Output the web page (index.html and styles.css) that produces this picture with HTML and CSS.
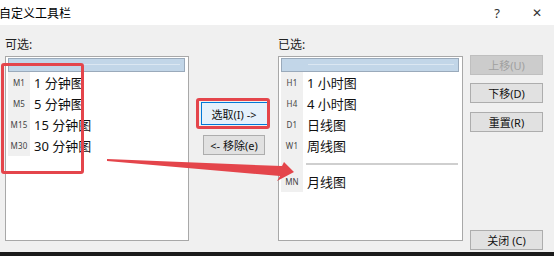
FILE: index.html
```html
<!DOCTYPE html>
<html lang="zh-CN">
<head>
  <meta charset="UTF-8" />
  <title>自定义工具栏</title>
  <link rel="stylesheet" href="styles.css">
</head>
<body>
  <div class="window">
    <div class="titlebar">
      <span class="title">自定义工具栏</span>
      <span class="tb-help">?</span>
      <span class="tb-close">✕</span>
    </div>

    <div class="dialog">
      <div class="pane pane-left">
        <div class="pane-label">可选:</div>
        <div class="listbox">
          <div class="list-head"></div>
          <div class="list-rows">
            <div class="row"><span class="ico">M1</span><span class="txt">1 分钟图</span></div>
            <div class="row"><span class="ico">M5</span><span class="txt">5 分钟图</span></div>
            <div class="row"><span class="ico">M15</span><span class="txt">15 分钟图</span></div>
            <div class="row"><span class="ico">M30</span><span class="txt">30 分钟图</span></div>
          </div>
        </div>
      </div>

      <div class="mid">
        <button class="btn btn-focus">选取(I) -&gt;</button>
        <button class="btn btn-remove">&lt;- 移除(e)</button>
      </div>

      <div class="pane pane-right">
        <div class="pane-label">已选:</div>
        <div class="listbox">
          <div class="list-head"></div>
          <div class="list-rows">
            <div class="row"><span class="ico">H1</span><span class="txt">1 小时图</span></div>
            <div class="row"><span class="ico">H4</span><span class="txt">4 小时图</span></div>
            <div class="row"><span class="ico">D1</span><span class="txt">日线图</span></div>
            <div class="row"><span class="ico">W1</span><span class="txt">周线图</span></div>
            <div class="row sep"><span class="ico"></span><span class="line"></span></div>
            <div class="row"><span class="ico">MN</span><span class="txt">月线图</span></div>
          </div>
        </div>
      </div>

      <div class="side">
        <button class="btn" disabled>上移(U)</button>
        <button class="btn">下移(D)</button>
        <button class="btn">重置(R)</button>
        <button class="btn btn-close">关闭 (C)</button>
      </div>
    </div>
    <div class="taskbar"></div>

    <!-- annotations -->
    <div class="mark mark-list"></div>
    <div class="mark mark-btn"></div>
    <svg class="arrow" width="554" height="256" viewBox="0 0 554 256">
      <polygon points="107,159 282,166 284,162 294,172 277,181 280,176 107,161" fill="#e4454b"/>
    </svg>
  </div>
</body>
</html>
```

FILE: styles.css
```css
body { margin: 0; background: #f0f0f0; font-family: "Noto Sans", "Noto Sans CJK SC", sans-serif; color: #000; }
.window { position: relative; width: 554px; height: 256px; overflow: hidden; background: #f0f0f0; }

.titlebar { height: 25px; background: #fff; display: flex; align-items: center; font-size: 12px; }
.title { margin-left: -1px; flex: 1; }
.tb-help { width: 20px; text-align: center; margin-right: 25px; font-size: 13px; color: #333; }
.tb-close { width: 14px; margin-right: 8px; font-size: 12px; color: #333; }

.dialog { display: flex; height: 215px; padding: 12px 0 0 5px; }
.pane { display: flex; flex-direction: column; }
.pane-left { width: 184px; }
.pane-right { width: 185px; }
.pane-label { height: 19px; font-size: 12px; line-height: 15px; color: #222; }

.listbox { height: 181px; background: #fff; border: 1px solid #a8a8a8; padding: 1px; }
.list-head { height: 12px; margin: 0 2px 0 1px; background: #c2d6e8; border: 1px solid #9aaabb; position: relative; }
.list-head::after { content: ""; position: absolute; left: 26px; right: 4px; top: 5px; height: 1px; background: #dbe7f2; }

.list-rows { display: flex; flex-direction: column; padding-left: 1px; }
.row { display: flex; align-items: center; height: 21px; }
.ico { width: 22px; height: 100%; background: #f0f0f0; font-size: 8px; color: #444; display: flex; align-items: center; justify-content: center; letter-spacing: 0.2px; }
.txt { margin-left: 4px; font-size: 13px; color: #111; }
.row.sep { height: 15px; }
.line { flex: 1; height: 2px; background: #cfcfcf; margin: 0 3px 0 3px; }

.mid { width: 89px; display: flex; flex-direction: column; align-items: center; padding-top: 65px; }
.btn { font-family: inherit; font-size: 11px; color: #111; background: #e1e1e1; border: 1px solid #adadad; padding: 0; height: 20px; }
.mid .btn { margin-left: 1px; }
.btn-focus { width: 67px; height: 23px; background: #e5f1fb; border-color: #0078d7; }
.btn-remove { width: 62px; margin-top: 10px; }

.side { width: 73px; margin-left: 7px; display: flex; flex-direction: column; padding: 18px 0 2px; }
.side .btn { margin-bottom: 8px; }
.side .btn:nth-child(2) { margin-bottom: 9px; }
.btn:disabled { background: #cccccc; border-color: #bfbfbf; color: #a0a0a0; }
.side .btn-close { margin-top: auto; margin-bottom: 0; }

.taskbar { height: 4px; background: #1b1b1b; }

.mark { position: absolute; border: 3px solid #e4454b; border-radius: 3px; }
.mark-list { left: 1px; top: 63px; width: 77px; height: 105px; }
.mark-btn { left: 196px; top: 98px; width: 68px; height: 25px; }
.arrow { position: absolute; left: 0; top: 0; }
```
